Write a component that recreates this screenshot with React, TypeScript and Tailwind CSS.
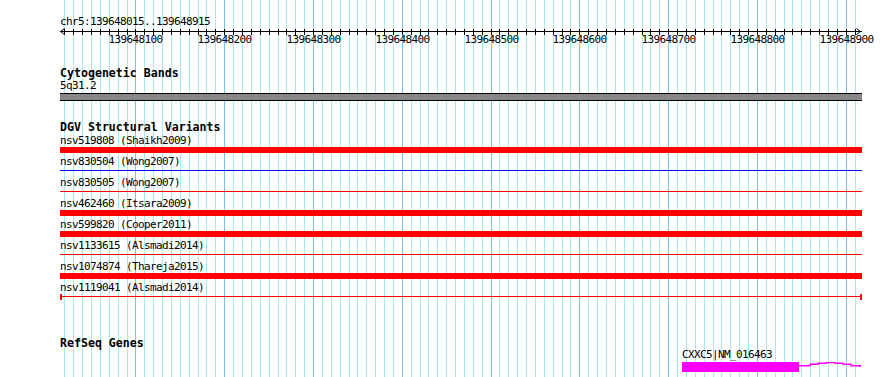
const SCALE = 0.8878;
const xOf = (b: number) => Math.floor(60.5 + (b - 15) * SCALE);

const gridBases = Array.from({ length: 90 }, (_, i) => 20 + i * 10);
const majorBases = [100, 200, 300, 400, 500, 600, 700, 800, 900];

type Kind = "thick" | "blue" | "red" | "capped";

const variants: { label: string; kind: Kind }[] = [
  { label: "nsv519808 (Shaikh2009)", kind: "thick" },
  { label: "nsv830504 (Wong2007)", kind: "blue" },
  { label: "nsv830505 (Wong2007)", kind: "red" },
  { label: "nsv462460 (Itsara2009)", kind: "thick" },
  { label: "nsv599820 (Cooper2011)", kind: "thick" },
  { label: "nsv1133615 (Alsmadi2014)", kind: "red" },
  { label: "nsv1074874 (Thareja2015)", kind: "thick" },
  { label: "nsv1119041 (Alsmadi2014)", kind: "capped" },
];

// small label text: 6px advance per glyph, glyphs a bit taller than 10px
const small = "text-[11px] leading-[11px] tracking-[-0.62px] whitespace-pre";

function Grid() {
  return (
    <svg width={890} height={377} className="absolute inset-0" shapeRendering="crispEdges">
      {gridBases.map((b) => (
        <rect
          key={b}
          x={xOf(b)}
          y={0}
          width={1}
          height={377}
          fill={b % 100 === 0 ? "#7dc0ec" : "#aae8ee"}
        />
      ))}
    </svg>
  );
}

function Ruler() {
  return (
    <div className="relative h-[18px] w-[802px]">
      <svg width={802} height={18} className="absolute left-0 top-0" shapeRendering="crispEdges">
        <rect x={0} y={4} width={802} height={1} fill="#000" />
        {gridBases.map((b) => (
          <rect key={b} x={xOf(b) - 60} y={2} width={1} height={6} fill="#000" />
        ))}
        <path
          d="M0.5 4.5 L4.5 1.5 M0.5 4.5 L4.5 7.5 M800.5 4.5 L796.5 1.5 M800.5 4.5 L796.5 7.5"
          stroke="#000"
          strokeWidth={1}
          shapeRendering="auto"
        />
      </svg>
      {majorBases.map((b) => (
        <span
          key={b}
          className={`absolute top-[7px] h-[11px] -translate-x-1/2 ${small}`}
          style={{ left: xOf(b) - 60 + 0.5 }}
        >
          {139648000 + b}
        </span>
      ))}
    </div>
  );
}

function Feature({ kind }: { kind: Kind }) {
  if (kind === "thick") {
    return (
      <div className="h-[8px] w-[802px]">
        <div className="mt-[1px] h-[6px] bg-[#ff0000]" />
      </div>
    );
  }
  if (kind === "capped") {
    return (
      <div className="flex h-[8px] w-[802px] items-start">
        <div className="mt-[1px] h-[6px] w-[2px] bg-[#ff0000]" />
        <div className="mt-[3px] h-px flex-1 bg-[#ff0000]" />
        <div className="mt-[1px] h-[6px] w-[2px] bg-[#ff0000]" />
      </div>
    );
  }
  return (
    <div className="h-[8px] w-[802px]">
      <div className={kind === "blue" ? "mt-[3px] h-px bg-[#0000ff]" : "mt-[3px] h-px bg-[#ff0000]"} />
    </div>
  );
}

function Title({ children }: { children: string }) {
  return <div className="h-[12px] text-[11.6px] font-bold leading-[12px] whitespace-pre">{children}</div>;
}

export default function App() {
  return (
    <div
      className="relative h-[377px] w-[890px] overflow-hidden bg-white text-black"
      style={{ fontFamily: '"DejaVu Sans Mono", "Liberation Mono", monospace' }}
    >
      <Grid />
      <div className="relative flex flex-col pl-[60px] pt-[16px]">
        <div className={`h-[11px] ${small}`}>chr5:139648015..139648915</div>
        <Ruler />

        <div className="mt-[22px]">
          <Title>Cytogenetic Bands</Title>
        </div>
        <div className={`mt-[1px] h-[11px] ${small}`}>5q31.2</div>
        <div className="mt-[2px] h-[8px] w-[802px] border-y border-black bg-[#888888]" />

        <div className="mt-[20px]">
          <Title>DGV Structural Variants</Title>
        </div>
        <div className="mt-[2px] flex flex-col">
          {variants.map((v) => (
            <div key={v.label} className="flex h-[21px] flex-col">
              <div className={`h-[11px] ${small}`}>{v.label}</div>
              <Feature kind={v.kind} />
            </div>
          ))}
        </div>

        <div className="mt-[34px]">
          <Title>RefSeq Genes</Title>
        </div>
        <div className="ml-[622px] flex flex-col">
          <div className={`h-[12px] ${small}`}>CXXC5|NM_016463</div>
          <svg width={180} height={10} className="mt-[1px]">
            <rect x={0} y={0} width={117} height={10} fill="#ff00ff" />
            <path
              d="M117 3.7 H128 V2.3 H136 V1.3 H144 V0.5 H153 V1.3 H161 V2.3 H169 V3.7 H178 V4.3 H179"
              fill="none"
              stroke="#ff00ff"
              strokeWidth={1.4}
            />
          </svg>
        </div>
      </div>
    </div>
  );
}
